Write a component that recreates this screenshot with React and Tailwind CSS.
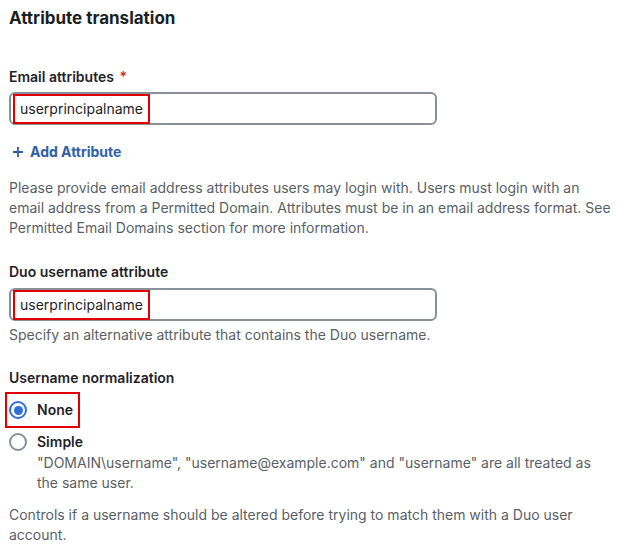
import React from "react";

/* ── fake text input with highlighted value ── */
function FieldBox({ value }) {
  return (
    <div className="flex items-center h-[33px] w-[428px] rounded-[6px] border-2 border-[#8a9098] bg-white pl-[2px]">
      <span className="flex items-center h-[30px] px-[5px] border-[2.5px] border-[#e00000] text-[14px] text-[#1f2328]">
        {value}
      </span>
    </div>
  );
}

function Radio({ checked }) {
  return (
    <span
      className={`flex items-center justify-center w-[18px] h-[18px] rounded-full border-2 shrink-0 ${
        checked ? "border-[#2f6fd8]" : "border-[#8a9098]"
      }`}
    >
      {checked && <span className="w-[9px] h-[9px] rounded-full bg-[#2f6fd8]" />}
    </span>
  );
}

export default function App() {
  return (
    <div
      className="w-[624px] h-[553px] bg-white px-[9px] pt-[6px] overflow-hidden"
      style={{ fontFamily: "Inter, 'Noto Sans', sans-serif" }}
    >
      <h2 className="text-[17px] leading-[24px] font-bold text-[#1b1f24]">Attribute translation</h2>

      {/* Email attributes */}
      <div className="mt-[37px] text-[14px] leading-[20px] font-semibold text-[#1f2328]">
        Email attributes <span className="text-[#d3272f] ml-[2px]">*</span>
      </div>
      <div className="mt-[5px]">
        <FieldBox value="userprincipalname" />
      </div>
      <div className="mt-[17px] flex items-center gap-[6px] text-[14px] leading-[20px] font-bold text-[#2f5fa7]">
        <svg width="12" height="12" viewBox="0 0 12 12" className="ml-[3px]">
          <path d="M6 1v10M1 6h10" stroke="#2f5fa7" strokeWidth="1.8" />
        </svg>
        Add Attribute
      </div>
      <p className="mt-[16px] text-[14px] leading-[20px] text-[#5a5f66] pr-[2px]">
        Please provide email address attributes users may login with. Users must login with an email address from a
        Permitted Domain. Attributes must be in an email address format. See Permitted Email Domains section for more
        information.
      </p>

      {/* Duo username attribute */}
      <div className="mt-[24px] text-[14px] leading-[20px] font-semibold text-[#1f2328]">Duo username attribute</div>
      <div className="mt-[6px]">
        <FieldBox value="userprincipalname" />
      </div>
      <p className="mt-[4px] text-[14px] leading-[20px] text-[#5a5f66]">
        Specify an alternative attribute that contains the Duo username.
      </p>

      {/* Username normalization */}
      <div className="mt-[23px] text-[14px] leading-[20px] font-semibold text-[#1f2328]">Username normalization</div>
      <div className="mt-[4px] ml-[-4px] inline-flex items-center gap-[10px] border-[2.5px] border-[#e00000] pl-[2px] pr-[5px] py-[6px]">
        <Radio checked />
        <span className="text-[14px] leading-[20px] font-semibold text-[#1f2328]">None</span>
      </div>
      <div className="mt-[4px] flex items-start gap-[10px]">
        <span className="mt-[1px]">
          <Radio />
        </span>
        <div>
          <div className="text-[14px] leading-[20px] font-semibold text-[#1f2328]">Simple</div>
          <div className="mt-[1px] text-[14px] leading-[20px] text-[#5a5f66] w-[560px]">
            "DOMAIN\username", "username@example.com" and "username" are all treated as the same user.
          </div>
        </div>
      </div>
      <p className="mt-[12px] text-[14px] leading-[20px] text-[#5a5f66] w-[580px]">
        Controls if a username should be altered before trying to match them with a Duo user account.
      </p>
    </div>
  );
}
